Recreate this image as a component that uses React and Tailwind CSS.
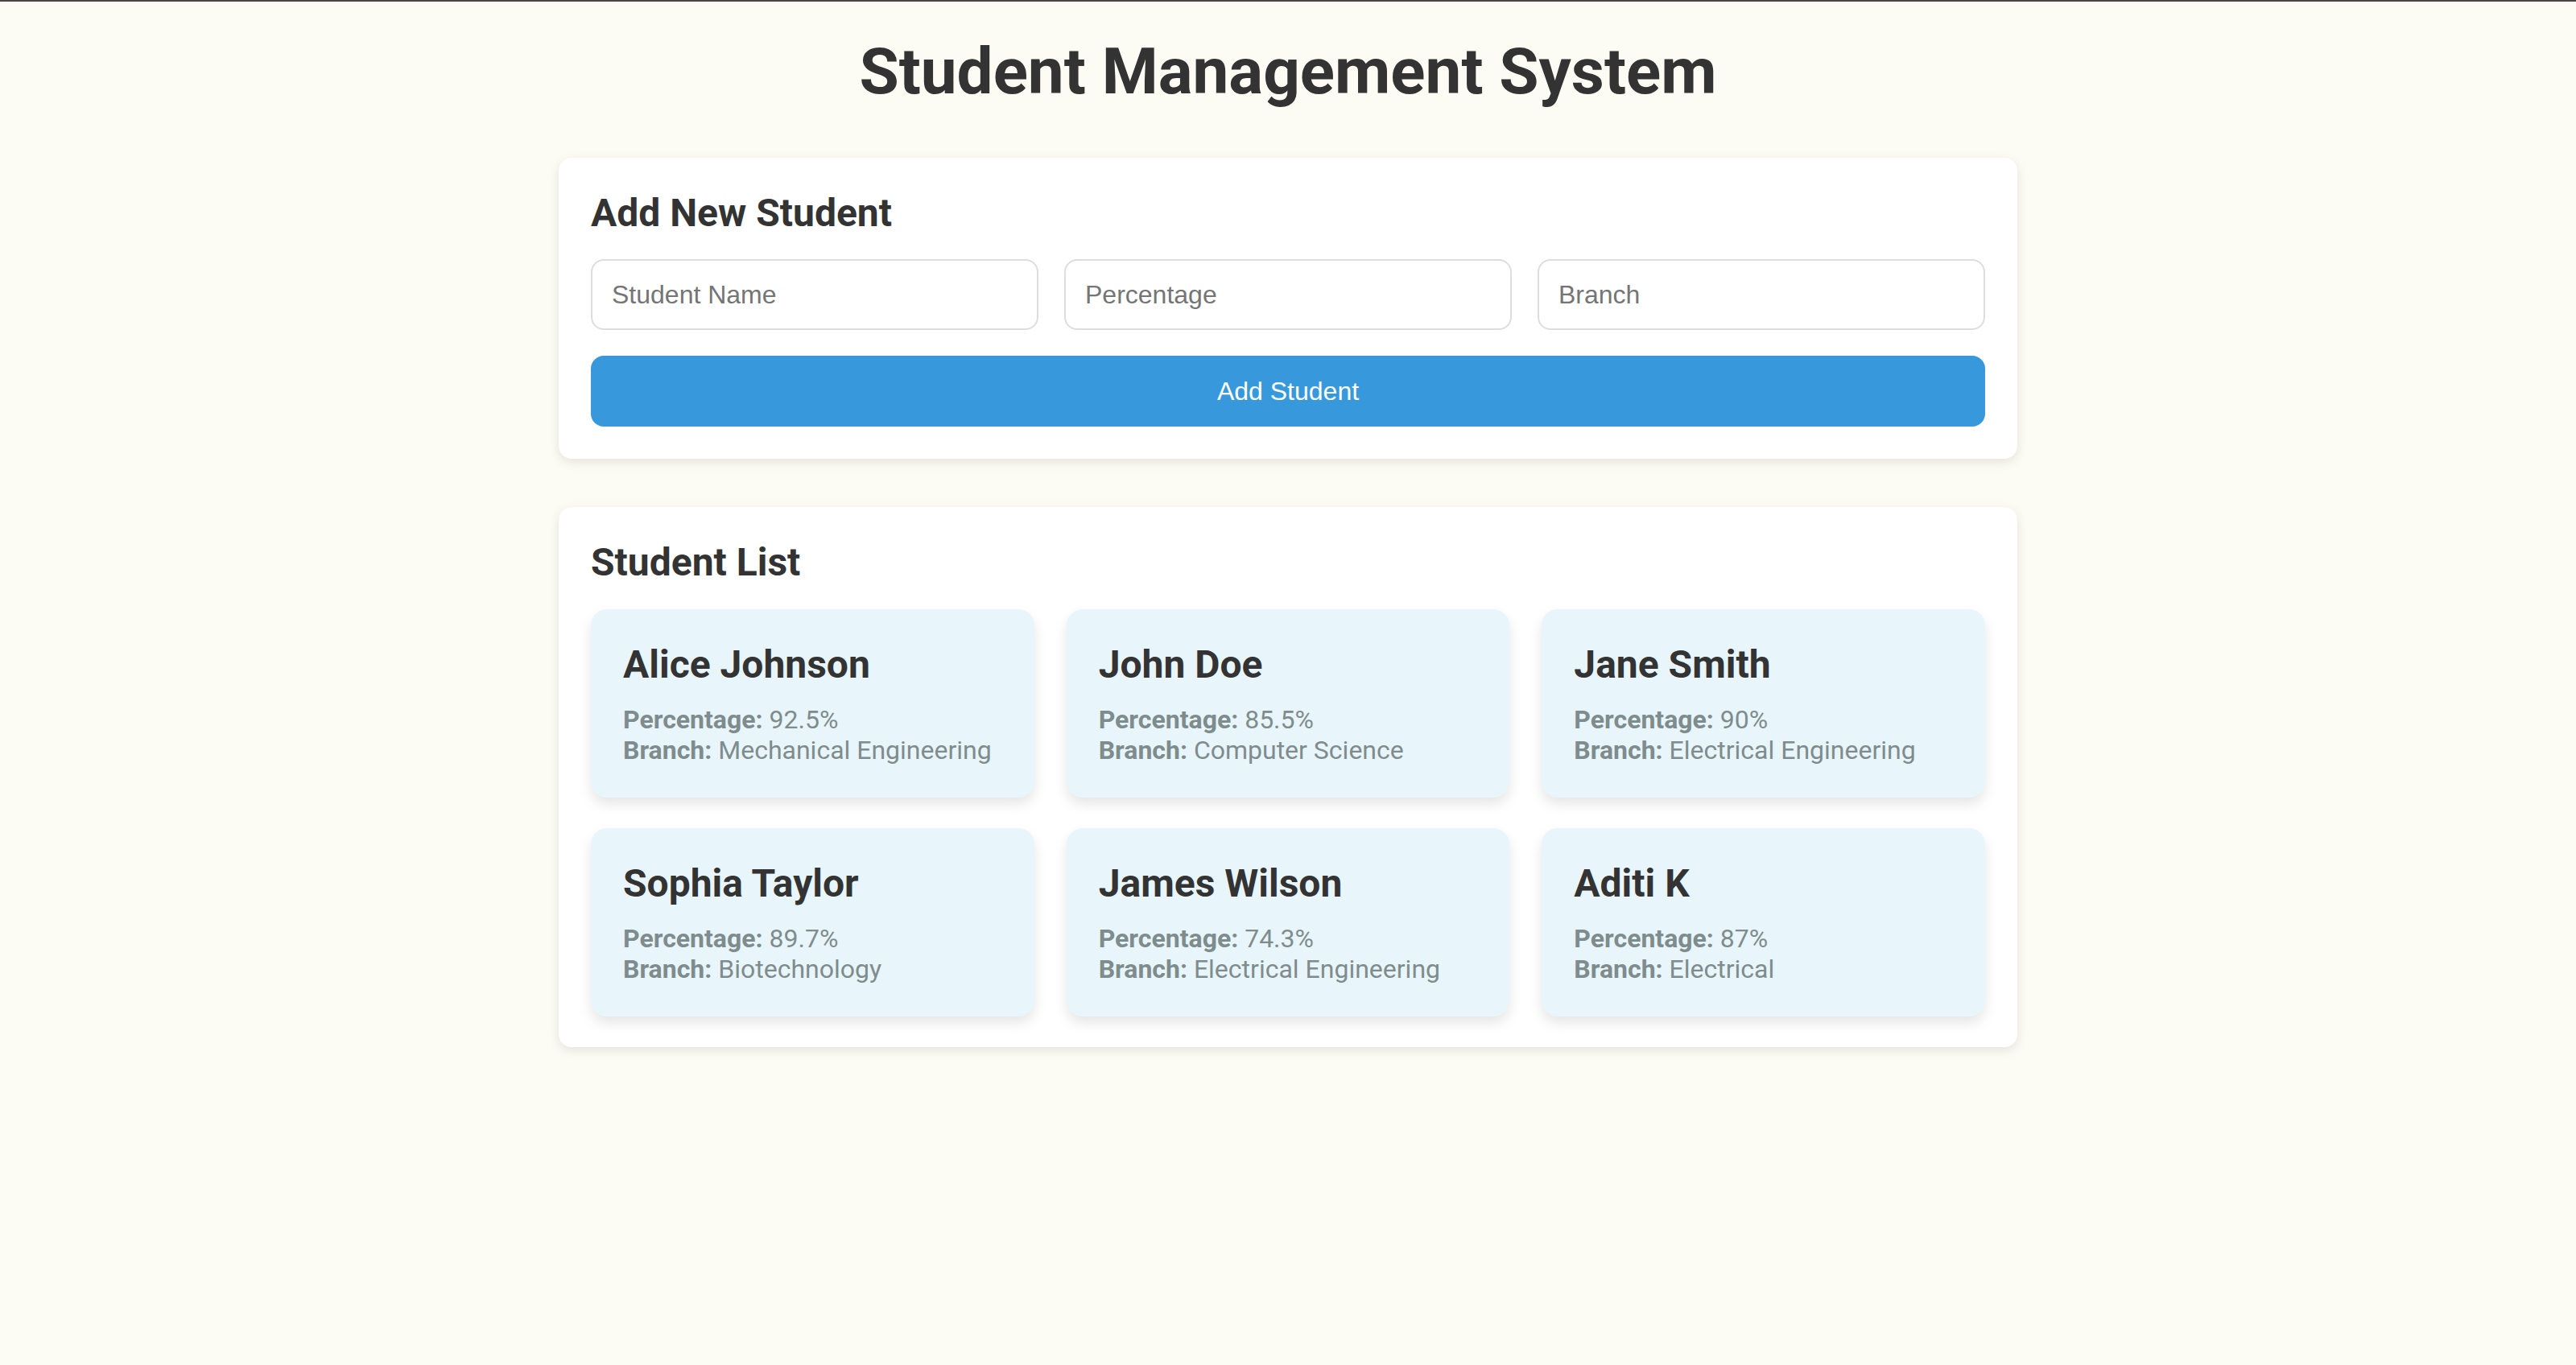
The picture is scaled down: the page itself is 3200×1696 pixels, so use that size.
import React from "react";

const students = [
  { name: "Alice Johnson", pct: "92.5%", branch: "Mechanical Engineering" },
  { name: "John Doe", pct: "85.5%", branch: "Computer Science" },
  { name: "Jane Smith", pct: "90%", branch: "Electrical Engineering" },
  { name: "Sophia Taylor", pct: "89.7%", branch: "Biotechnology" },
  { name: "James Wilson", pct: "74.3%", branch: "Electrical Engineering" },
  { name: "Aditi K", pct: "87%", branch: "Electrical" },
];

export default function App() {
  return (
    <div className="min-h-screen bg-[#fcfcf4] border-t-2 border-[#4a4545] font-['Roboto',sans-serif] text-[#333]">
      <h1 className="text-center text-[80px] font-bold leading-[normal] pt-[40px]">
        Student Management System
      </h1>
      <div className="w-[1812px] mx-auto mt-[60px] pb-[40px]">
        <div className="bg-white rounded-[16px] p-[40px] shadow-[0_4px_14px_rgba(0,0,0,0.1)]">
          <h2 className="text-[48px] font-bold leading-[normal] mb-[29px]">Add New Student</h2>
          <div className="grid grid-cols-3 gap-[32px]">
            {["Student Name", "Percentage", "Branch"].map((p) => (
              <input
                key={p}
                placeholder={p}
                className="h-[88px] border-2 border-[#dddddd] rounded-[16px] px-[24px] text-[32px] font-['Liberation_Sans',Arial,sans-serif] bg-white placeholder:text-[#757575] outline-none"
              />
            ))}
          </div>
          <button className="mt-[32px] w-full h-[88px] bg-[#3799db] text-white text-[32px] rounded-[16px] font-['Liberation_Sans',Arial,sans-serif]">
            Add Student
          </button>
        </div>
        <div className="mt-[60px] bg-white rounded-[16px] px-[40px] pt-[40px] pb-[38px] shadow-[0_4px_14px_rgba(0,0,0,0.1)]">
          <h2 className="text-[48px] font-bold leading-[normal] mb-[30px]">Student List</h2>
          <div className="grid grid-cols-3 gap-x-[40px] gap-y-[38px]">
            {students.map((s) => (
              <div
                key={s.name}
                className="bg-[#e8f6fc] rounded-[20px] p-[40px] shadow-[0_8px_16px_rgba(0,0,0,0.1)]"
              >
                <h3 className="text-[48px] font-bold leading-[normal] mb-[21px]">{s.name}</h3>
                <p className="text-[32px] leading-[normal] text-[#7f8c8d]">
                  <strong className="font-bold">Percentage:</strong> {s.pct}
                </p>
                <p className="text-[32px] leading-[normal] text-[#7f8c8d]">
                  <strong className="font-bold">Branch:</strong> {s.branch}
                </p>
              </div>
            ))}
          </div>
        </div>
      </div>
    </div>
  );
}
